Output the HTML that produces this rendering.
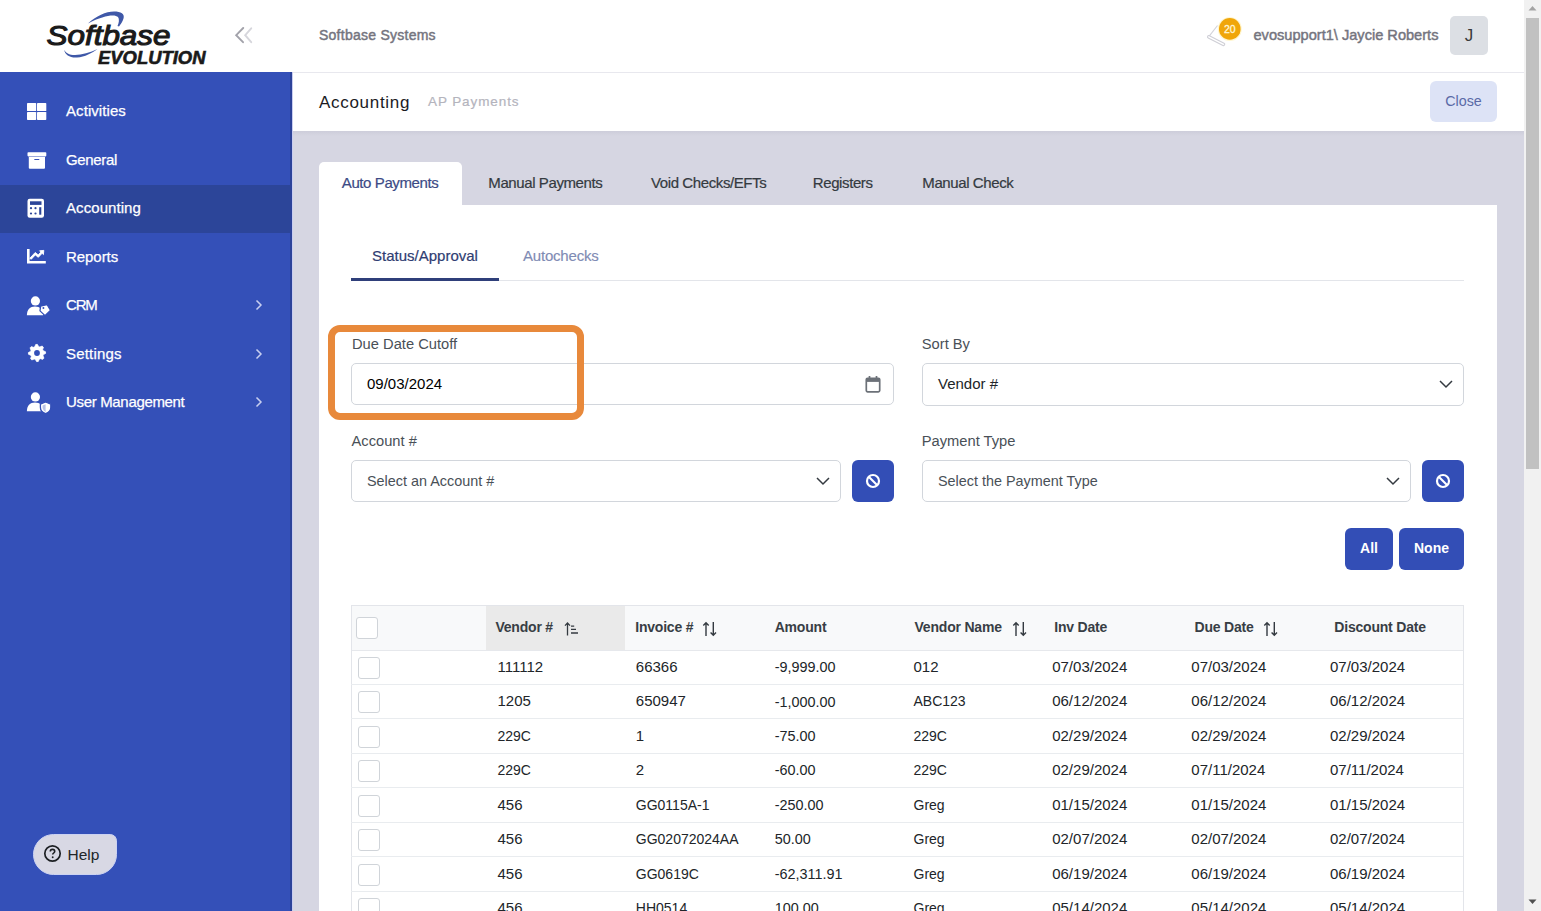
<!DOCTYPE html>
<html><head><meta charset="utf-8">
<style>
*{box-sizing:border-box;margin:0;padding:0}
html,body{width:1541px;height:911px;overflow:hidden;font-family:"Liberation Sans",sans-serif;background:#fff}
.abs{position:absolute;white-space:nowrap}
#side{position:absolute;left:0;top:0;width:292px;height:911px;background:#3450b8}
#logo{position:absolute;left:0;top:0;width:292px;height:72px;background:#fff}
.mi{position:absolute;left:0;width:292px;height:47.5px;color:#fff;font-size:15px}
.mi .t{position:absolute;left:66px;top:14.2px;line-height:18px;letter-spacing:-0.33px;-webkit-text-stroke:0.25px #fff}
.mi svg.ic{position:absolute}
.mi .chev{position:absolute;left:254px;top:16.5px}
.mi.act{background:#2c4599}
#help{position:absolute;left:33px;top:833.5px;width:84px;height:41px;background:#d8d8e4;border:1px solid #cbd2f2;border-radius:21px 7px 21px 21px;font-size:15.5px;color:#212529}
#top{position:absolute;left:292px;top:0;width:1232px;height:73px;background:#fff;border-bottom:1px solid #e8e8ee}
#crumb{position:absolute;left:292px;top:73px;width:1232px;height:58px;background:#fff}
#content{position:absolute;left:292px;top:131px;width:1232px;height:780px;background:#d6d6e2}
#scroll{position:absolute;left:1524px;top:0;width:17px;height:911px;background:#f1f1f1}
#thumb{position:absolute;left:1526px;top:17.5px;width:13px;height:451px;background:#c1c1c1}
.tab{position:absolute;top:161.5px;height:44px;font-size:15px;color:#343a40;line-height:18px;letter-spacing:-0.4px;-webkit-text-stroke:0.2px #343a40}
.tab span{position:absolute;top:12.5px;white-space:nowrap}
#card{position:absolute;left:319px;top:205px;width:1178px;height:706px;background:#fff}
.lbl{position:absolute;font-size:14.7px;color:#495057;line-height:17px;white-space:nowrap}
.inp{position:absolute;height:42px;border:1px solid #d2d6dc;border-radius:5px;background:#fff;font-size:14.4px;color:#495057}
.inp span{position:absolute;left:15px;top:11px;line-height:18px;white-space:nowrap}
.btn{position:absolute;background:#334eb6;border-radius:6px;color:#fff;font-weight:bold;font-size:14px}
.hd{top:618.5px;font-size:14px;font-weight:bold;color:#383e45;line-height:17px;letter-spacing:-0.2px}
.cb{position:absolute;width:22px;height:22px;border:1px solid #d0d4d9;border-radius:3px;background:#fff}
.row{position:absolute;left:351px;width:1112px;height:34.5px;border-bottom:1px solid #e9ecef;font-size:15px;color:#212529}
.row span{position:absolute;top:7.5px;line-height:18px;white-space:nowrap}
</style></head><body>
<div id="side">
  <div id="logo">
    <svg class="abs" style="left:40px;top:5px" width="175" height="65" viewBox="0 0 175 65">
      <path d="M48 18.5 C56 11 66 6.5 74 6.5 C81 6.5 85 9 83.5 13.5 C82.5 16.5 81 19 79 21.5 L77.5 21 C79 18 79.5 14 78 12 C75 9 64 10 48 18.5Z" fill="#3f58a8"/>
      <path d="M24 44.5 C25 50 30 53 37 52.5 C45 52 52 48 57.5 44 C50 47.5 42 50 35 50 C29 50 25.5 48 24 44.5Z" fill="#3f58a8"/>
      <text x="6.5" y="40.2" font-family="Liberation Sans" font-style="italic" font-size="28.5" fill="#1a1a1a" stroke="#1a1a1a" stroke-width="1.1" textLength="124" lengthAdjust="spacingAndGlyphs">Softbase</text>
      <text x="58" y="58.5" font-family="Liberation Sans" font-style="italic" font-weight="bold" font-size="18" fill="#1a1a1a" stroke="#1a1a1a" stroke-width="0.6" textLength="107.5" lengthAdjust="spacingAndGlyphs">EVOLUTION</text>
    </svg>
    <svg class="abs" style="left:234px;top:27px" width="20" height="17" viewBox="0 0 20 17"><path d="M9.2 1 L2.2 8.2 L9 15.2" stroke="#a2a2aa" stroke-width="1.9" stroke-linecap="round" fill="none"/><path d="M17.2 1.3 L11.2 8.2 L17.2 15.2" stroke="#d6d6dc" stroke-width="1.9" stroke-linecap="round" fill="none"/></svg>
  </div>
  <div class="mi" style="top:88.10px"><svg class="ic" style="left:27px;top:15px" width="20" height="18" viewBox="0 0 20 18"><rect x="0" y="0" width="9.2" height="8.1" rx="0.7" fill="#fff"/><rect x="10" y="0" width="9.3" height="8.1" rx="0.7" fill="#fff"/><rect x="0" y="8.9" width="9.2" height="8" rx="0.7" fill="#fff"/><rect x="10" y="8.9" width="9.3" height="8" rx="0.7" fill="#fff"/></svg><span class="t" style="letter-spacing:0.07px">Activities</span></div><div class="mi" style="top:136.55px"><svg class="ic" style="left:27px;top:15px" width="20" height="20" viewBox="0 0 20 20"><rect x="0.5" y="0.3" width="18.8" height="4.1" rx="0.8" fill="#fff"/><path d="M1.8 4.9h16.2v10.8a1 1 0 0 1-1 1H2.8a1 1 0 0 1-1-1z" fill="#fff"/><rect x="7.2" y="6.9" width="5.2" height="1.2" rx="0.6" fill="#3450b8"/></svg><span class="t" style="letter-spacing:-0.33px">General</span></div><div class="mi act" style="top:185.00px"><svg class="ic" style="left:26px;top:13px" width="20" height="20" viewBox="0 0 20 20"><rect x="1.5" y="0.8" width="16.5" height="19" rx="2.2" fill="#fff"/><rect x="4" y="3.3" width="11.5" height="3.6" fill="#2c4599"/><circle cx="5" cy="10.2" r="1.1" fill="#2c4599"/><circle cx="9.5" cy="10.2" r="1.1" fill="#2c4599"/><circle cx="5" cy="15.5" r="1.1" fill="#2c4599"/><circle cx="9.5" cy="15.5" r="1.1" fill="#2c4599"/><rect x="13.2" y="9.2" width="2.1" height="7.5" fill="#2c4599"/></svg><span class="t" style="letter-spacing:0.07px">Accounting</span></div><div class="mi" style="top:233.45px"><svg class="ic" style="left:27px;top:15.3px" width="22" height="18" viewBox="0 0 22 18"><path d="M1.3 0v13.2h17.5" stroke="#fff" stroke-width="2.6" fill="none"/><path d="M4.3 10.2l4-4.3 3 2.4 3.8-4 1.3 1.3 .4-4.2-4.2.4 1.3 1.3-2.7 2.8-3-2.4-5.4 5.8z" fill="#fff" stroke="#fff" stroke-width="0.9" stroke-linejoin="round"/></svg><span class="t" style="letter-spacing:-0.05px">Reports</span></div><div class="mi" style="top:281.90px"><svg class="ic" style="left:26px;top:13.7px" width="26" height="22" viewBox="0 0 26 22"><circle cx="9.4" cy="4.9" r="4.6" fill="#fff"/><path d="M0.9 19.3C0.9 13.8 4 10.6 9 10.6S17.2 13.8 17.2 19.3z" fill="#fff"/><path d="M14.6 10.2L21 8.5 24.6 14.3 19 19.6 14 14.9z" fill="#fff" stroke="#3450b8" stroke-width="1.3" stroke-linejoin="round"/><circle cx="17.4" cy="12" r="0.95" fill="#3450b8"/></svg><span class="t" style="letter-spacing:-1.2px">CRM</span><svg class="chev" width="10" height="14" viewBox="0 0 10 14"><path d="M2.5 2.5l4.5 4.5-4.5 4.5" stroke="#c8cff0" stroke-width="1.5" fill="none"/></svg></div><div class="mi" style="top:330.35px"><svg class="ic" style="left:27px;top:12.8px" width="20" height="20" viewBox="0 0 20 20"><path d="M8.74 1.49 L10.42 1.41 L11.60 3.60 L12.82 4.03 L15.12 3.09 L16.37 4.22 L15.66 6.61 L16.21 7.78 L18.51 8.74 L18.59 10.42 L16.40 11.60 L15.97 12.82 L16.91 15.12 L15.78 16.37 L13.39 15.66 L12.22 16.21 L11.26 18.51 L9.58 18.59 L8.40 16.40 L7.18 15.97 L4.88 16.91 L3.63 15.78 L4.34 13.39 L3.79 12.22 L1.49 11.26 L1.41 9.58 L3.60 8.40 L4.03 7.18 L3.09 4.88 L4.22 3.63 L6.61 4.34 L7.78 3.79Z" fill="#fff" stroke="#fff" stroke-width="0.8" stroke-linejoin="round"/><circle cx="10" cy="10" r="2.9" fill="#3450b8"/></svg><span class="t" style="letter-spacing:0.2px">Settings</span><svg class="chev" width="10" height="14" viewBox="0 0 10 14"><path d="M2.5 2.5l4.5 4.5-4.5 4.5" stroke="#c8cff0" stroke-width="1.5" fill="none"/></svg></div><div class="mi" style="top:378.80px"><svg class="ic" style="left:26px;top:13.7px" width="26" height="22" viewBox="0 0 26 22"><circle cx="9.4" cy="4.9" r="4.6" fill="#fff"/><path d="M0.9 19.3C0.9 13.8 4 10.6 9 10.6S17.2 13.8 17.2 19.3z" fill="#fff"/><path d="M19.6 10l5.2 2.1v3.2c0 3-2.1 5.4-5.2 6.3-3.1-.9-5.2-3.3-5.2-6.3v-3.2z" fill="#fff" stroke="#3450b8" stroke-width="1.3"/><path d="M19.6 12.3v7.6c-1.8-.8-3-2.5-3-4.6v-1.8z" fill="#3450b8" opacity="0.35"/></svg><span class="t" style="letter-spacing:-0.33px">User Management</span><svg class="chev" width="10" height="14" viewBox="0 0 10 14"><path d="M2.5 2.5l4.5 4.5-4.5 4.5" stroke="#c8cff0" stroke-width="1.5" fill="none"/></svg></div>
  <div id="help"><svg class="abs" style="left:8.5px;top:9.5px" width="19" height="19" viewBox="0 0 19 19"><circle cx="9.5" cy="9.5" r="7.7" stroke="#1c1f23" stroke-width="1.7" fill="none"/><path d="M7.3 7.6c0-1.3 1-2.2 2.2-2.2s2.2 .9 2.2 2c0 1.5-2 1.7-2 3.2" stroke="#1c1f23" stroke-width="1.6" fill="none"/><circle cx="9.7" cy="13.2" r="0.95" fill="#1c1f23"/></svg><span class="abs" style="left:33.5px;top:11px;line-height:18px">Help</span></div>
</div>

<div id="top">
  <span class="abs" style="left:27px;top:27px;font-size:14px;color:#74747e;line-height:17px;letter-spacing:0.25px;-webkit-text-stroke:0.45px #74747e">Softbase Systems</span>
  <svg class="abs" style="left:913px;top:16px" width="40" height="34" viewBox="0 0 40 34">
    <path d="M12.5 9.5 L4 20.3" stroke="#d2d2d8" stroke-width="1.1" fill="none"/>
    <path d="M3.8 20.8 L18.5 28.3" stroke="#cfcfd6" stroke-width="3.6" stroke-linecap="round" fill="none"/>
    <path d="M3.8 20.8 L18.5 28.3" stroke="#fff" stroke-width="1.4" stroke-linecap="round" fill="none"/>
    <circle cx="24.8" cy="12.9" r="12" fill="#fff6cf"/>
    <circle cx="24.8" cy="12.9" r="10.8" fill="#f0a60a"/>
    <text x="24.8" y="16.6" text-anchor="middle" font-family="Liberation Sans" font-size="10.5" fill="#fff7d6" stroke="#fff7d6" stroke-width="0.3">20</text>
  </svg>
  <span class="abs" style="left:961.5px;top:27px;font-size:14.6px;color:#74747e;line-height:17px;-webkit-text-stroke:0.45px #74747e">evosupport1\ Jaycie Roberts</span>
  <div class="abs" style="left:1158px;top:16px;width:38px;height:38.5px;background:#dcdfe4;border-radius:5px;font-size:17px;color:#3a3a3a;text-align:center;line-height:40px">J</div>
</div>
<div id="crumb">
  <span class="abs" style="left:27px;top:21px;font-size:17px;letter-spacing:0.7px;color:#1b1b1f;line-height:17px">Accounting</span>
  <span class="abs" style="left:136px;top:19.5px;font-size:13.5px;letter-spacing:0.9px;color:#b4b4bd;line-height:17px;-webkit-text-stroke:0.2px #b4b4bd">AP Payments</span>
  <div class="abs" style="left:1138px;top:8px;width:67px;height:41px;background:#dde3f6;border-radius:6px;font-size:14.3px;color:#5a6aa6;text-align:center;line-height:41px">Close</div>
</div>
<div id="content"></div><div class="abs" style="left:292px;top:131px;width:1232px;height:5px;background:linear-gradient(#cdcdda,#d6d6e2)"></div><div class="abs" style="left:290px;top:72px;width:2px;height:839px;background:#2d439a"></div><div class="abs" style="left:292px;top:72px;width:1px;height:839px;background:#c9cdf0"></div>
<div id="scroll"><svg class="abs" style="left:4px;top:5px" width="9" height="6" viewBox="0 0 9 6"><path d="M0.5 5.5L4.5 1l4 4.5z" fill="#a3a3a3"/></svg><svg class="abs" style="left:4px;top:899px" width="9" height="6" viewBox="0 0 9 6"><path d="M0.5 0.5L4.5 5l4-4.5z" fill="#505050"/></svg></div><div id="thumb"></div>

<div class="tab" style="left:319px;width:143px;background:#fff;border-radius:5px 5px 0 0;color:#3c4a85;-webkit-text-stroke:0.2px #3c4a85"><span style="left:22.8px">Auto Payments</span></div>
<div class="tab" style="left:488.3px"><span style="left:0">Manual Payments</span></div>
<div class="tab" style="left:651px"><span style="left:0">Void Checks/EFTs</span></div>
<div class="tab" style="left:812.8px"><span style="left:0">Registers</span></div>
<div class="tab" style="left:922.3px"><span style="left:0">Manual Check</span></div>

<div id="card"></div>
<span class="abs" style="left:372px;top:247px;font-size:15px;color:#2f3d72;line-height:18px;-webkit-text-stroke:0.2px #2f3d72">Status/Approval</span>
<span class="abs" style="left:523px;top:247px;font-size:15px;color:#7f8bb4;line-height:18px;letter-spacing:-0.2px;-webkit-text-stroke:0.15px #7f8bb4">Autochecks</span>
<div class="abs" style="left:351px;top:280px;width:1113px;height:1px;background:#e3e5ea"></div>
<div class="abs" style="left:351px;top:277.8px;width:148px;height:3px;background:#2f3f7a"></div>

<span class="lbl" style="left:352px;top:336px">Due Date Cutoff</span>
<div class="inp" style="left:351px;top:363px;width:543px;height:42px;color:#000;font-size:15px"><span style="top:11px">09/03/2024</span>
  <svg class="abs" style="left:512px;top:10px" width="18" height="20" viewBox="0 0 18 20"><rect x="2.3" y="4.3" width="13.4" height="13.6" rx="1.3" stroke="#6c7178" stroke-width="1.7" fill="none"/><rect x="2.3" y="4.3" width="13.4" height="3.6" fill="#6c7178"/><path d="M5.5 2v3.5M12.5 2v3.5" stroke="#6c7178" stroke-width="1.7"/></svg>
</div>
<div class="abs" style="left:328px;top:324.5px;width:256px;height:95px;border:7px solid #e8893b;border-radius:12px"></div>

<span class="lbl" style="left:921.8px;top:336px">Sort By</span>
<div class="inp" style="left:922px;top:363px;width:542px;height:43px"><span style="color:#212529;font-size:15px;top:10.5px">Vendor #</span>
  <svg class="abs" style="left:515px;top:14px" width="16" height="12" viewBox="0 0 16 12"><path d="M2 3l6 6 6-6" stroke="#343a40" stroke-width="1.5" fill="none"/></svg>
</div>

<span class="lbl" style="left:351.5px;top:433px">Account #</span>
<div class="inp" style="left:351px;top:460px;width:490px"><span>Select an Account #</span>
  <svg class="abs" style="left:463px;top:14px" width="16" height="12" viewBox="0 0 16 12"><path d="M2 3l6 6 6-6" stroke="#343a40" stroke-width="1.5" fill="none"/></svg>
</div>
<div class="btn" style="left:852px;top:460px;width:42px;height:42px"><svg class="abs" style="left:12px;top:12px" width="18" height="18" viewBox="0 0 18 18"><circle cx="9" cy="9" r="6" stroke="#fff" stroke-width="2.2" fill="none"/><path d="M5 5l8 8" stroke="#fff" stroke-width="2.2"/></svg></div>

<span class="lbl" style="left:921.8px;top:433px">Payment Type</span>
<div class="inp" style="left:922px;top:460px;width:489px"><span>Select the Payment Type</span>
  <svg class="abs" style="left:462px;top:14px" width="16" height="12" viewBox="0 0 16 12"><path d="M2 3l6 6 6-6" stroke="#343a40" stroke-width="1.5" fill="none"/></svg>
</div>
<div class="btn" style="left:1422px;top:460px;width:42px;height:42px"><svg class="abs" style="left:12px;top:12px" width="18" height="18" viewBox="0 0 18 18"><circle cx="9" cy="9" r="6" stroke="#fff" stroke-width="2.2" fill="none"/><path d="M5 5l8 8" stroke="#fff" stroke-width="2.2"/></svg></div>

<div class="btn" style="left:1345px;top:528px;width:48px;height:42px;text-align:center;line-height:40px">All</div>
<div class="btn" style="left:1399px;top:528px;width:65px;height:42px;text-align:center;line-height:40px">None</div>

<div class="abs" style="left:351px;top:605px;width:1113px;height:306px;border:1px solid #e3e5ea;border-bottom:none"></div>
<div class="abs" style="left:352px;top:606px;width:1111px;height:45px;background:#f8f9fa;border-bottom:1px solid #e6e8ec"></div>
<div class="abs" style="left:486px;top:606px;width:139px;height:44px;background:#eaeaea"></div>
<div class="cb" style="left:356px;top:617px"></div>
<span class="abs hd" style="left:495.4px">Vendor #</span><svg class="abs" style="left:564px;top:621px" width="16" height="16" viewBox="0 0 16 16"><path d="M3.5 14.5V2.3M1 4.6l2.5-2.6 2.5 2.6" stroke="#343a40" stroke-width="1.3" fill="none"/><path d="M7 5.2h3.2M7 8.4h5M7 12h7" stroke="#343a40" stroke-width="1.3"/></svg><span class="abs hd" style="left:635.2px">Invoice #</span><svg class="abs" style="left:701.5px;top:621px" width="16" height="16" viewBox="0 0 16 16"><path d="M4 15V1.8M1.3 4.4L4 1.7l2.7 2.7" stroke="#343a40" stroke-width="1.4" fill="none"/><path d="M11.3 1v13.3M8.6 11.5l2.7 2.7 2.7-2.7" stroke="#343a40" stroke-width="1.4" fill="none"/></svg><span class="abs hd" style="left:774.7px">Amount</span><span class="abs hd" style="left:914.5px">Vendor Name</span><svg class="abs" style="left:1011.5px;top:621px" width="16" height="16" viewBox="0 0 16 16"><path d="M4 15V1.8M1.3 4.4L4 1.7l2.7 2.7" stroke="#343a40" stroke-width="1.4" fill="none"/><path d="M11.3 1v13.3M8.6 11.5l2.7 2.7 2.7-2.7" stroke="#343a40" stroke-width="1.4" fill="none"/></svg><span class="abs hd" style="left:1054.3px">Inv Date</span><span class="abs hd" style="left:1194.5px">Due Date</span><svg class="abs" style="left:1263px;top:621px" width="16" height="16" viewBox="0 0 16 16"><path d="M4 15V1.8M1.3 4.4L4 1.7l2.7 2.7" stroke="#343a40" stroke-width="1.4" fill="none"/><path d="M11.3 1v13.3M8.6 11.5l2.7 2.7 2.7-2.7" stroke="#343a40" stroke-width="1.4" fill="none"/></svg><span class="abs hd" style="left:1334.3px">Discount Date</span>
<div class="row" style="top:650.50px"><div class="cb" style="left:7px;top:6.5px"></div><span style="left:146.5px">111112</span><span style="left:284.8px">66366</span><span style="left:423.8px;font-size:14.4px;top:7.7px">-9,999.00</span><span style="left:562.5px">012</span><span style="left:701.2px">07/03/2024</span><span style="left:840.3px">07/03/2024</span><span style="left:979.0px">07/03/2024</span></div><div class="row" style="top:684.92px"><div class="cb" style="left:7px;top:6.5px"></div><span style="left:146.5px">1205</span><span style="left:284.8px">650947</span><span style="left:423.8px;font-size:14.4px;top:7.7px">-1,000.00</span><span style="left:562.5px;font-size:14px;top:7.5px">ABC123</span><span style="left:701.2px">06/12/2024</span><span style="left:840.3px">06/12/2024</span><span style="left:979.0px">06/12/2024</span></div><div class="row" style="top:719.34px"><div class="cb" style="left:7px;top:6.5px"></div><span style="left:146.5px;font-size:14px;top:7.5px">229C</span><span style="left:284.8px">1</span><span style="left:423.8px;font-size:14.4px;top:7.7px">-75.00</span><span style="left:562.5px;font-size:14px;top:7.5px">229C</span><span style="left:701.2px">02/29/2024</span><span style="left:840.3px">02/29/2024</span><span style="left:979.0px">02/29/2024</span></div><div class="row" style="top:753.76px"><div class="cb" style="left:7px;top:6.5px"></div><span style="left:146.5px;font-size:14px;top:7.5px">229C</span><span style="left:284.8px">2</span><span style="left:423.8px;font-size:14.4px;top:7.7px">-60.00</span><span style="left:562.5px;font-size:14px;top:7.5px">229C</span><span style="left:701.2px">02/29/2024</span><span style="left:840.3px">07/11/2024</span><span style="left:979.0px">07/11/2024</span></div><div class="row" style="top:788.18px"><div class="cb" style="left:7px;top:6.5px"></div><span style="left:146.5px">456</span><span style="left:284.8px;font-size:14px;top:7.5px">GG0115A-1</span><span style="left:423.8px;font-size:14.4px;top:7.7px">-250.00</span><span style="left:562.5px;font-size:14px;top:7.5px">Greg</span><span style="left:701.2px">01/15/2024</span><span style="left:840.3px">01/15/2024</span><span style="left:979.0px">01/15/2024</span></div><div class="row" style="top:822.60px"><div class="cb" style="left:7px;top:6.5px"></div><span style="left:146.5px">456</span><span style="left:284.8px;font-size:14px;top:7.5px">GG02072024AA</span><span style="left:423.8px;font-size:14.4px;top:7.7px">50.00</span><span style="left:562.5px;font-size:14px;top:7.5px">Greg</span><span style="left:701.2px">02/07/2024</span><span style="left:840.3px">02/07/2024</span><span style="left:979.0px">02/07/2024</span></div><div class="row" style="top:857.02px"><div class="cb" style="left:7px;top:6.5px"></div><span style="left:146.5px">456</span><span style="left:284.8px;font-size:14px;top:7.5px">GG0619C</span><span style="left:423.8px;font-size:14.4px;top:7.7px">-62,311.91</span><span style="left:562.5px;font-size:14px;top:7.5px">Greg</span><span style="left:701.2px">06/19/2024</span><span style="left:840.3px">06/19/2024</span><span style="left:979.0px">06/19/2024</span></div><div class="row" style="top:891.44px"><div class="cb" style="left:7px;top:6.5px"></div><span style="left:146.5px">456</span><span style="left:284.8px;font-size:14px;top:7.5px">HH0514</span><span style="left:423.8px;font-size:14.4px;top:7.7px">100.00</span><span style="left:562.5px;font-size:14px;top:7.5px">Greg</span><span style="left:701.2px">05/14/2024</span><span style="left:840.3px">05/14/2024</span><span style="left:979.0px">05/14/2024</span></div>
</body></html>
